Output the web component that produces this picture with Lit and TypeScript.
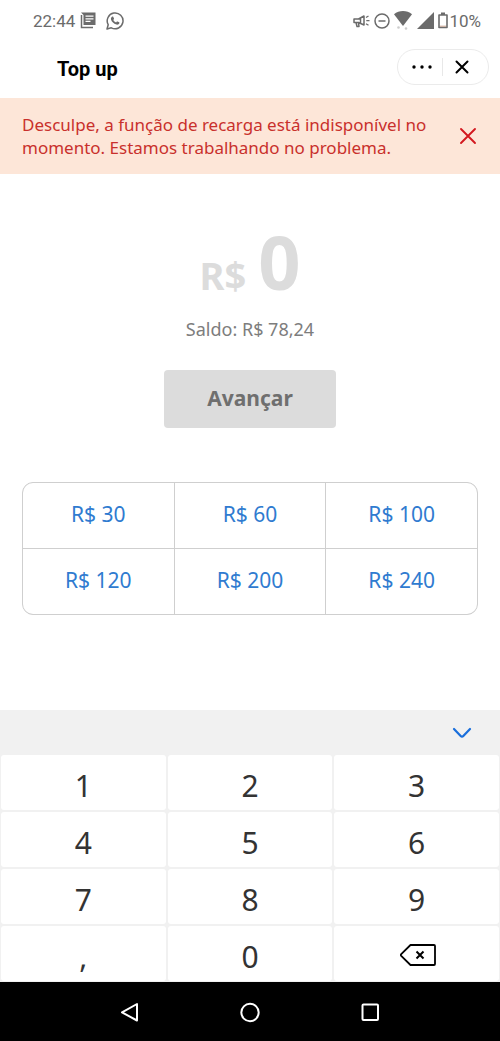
import { LitElement, html, css, svg } from "lit";
import { customElement } from "lit/decorators.js";

const AMOUNTS = ["30", "60", "100", "120", "200", "240"];
const KEYS = ["1", "2", "3", "4", "5", "6", "7", "8", "9", ",", "0"];

@customElement("status-bar")
export class StatusBar extends LitElement {
  static styles = css`
    :host {
      display: flex;
      align-items: center;
      justify-content: space-between;
      height: 40px;
      padding: 1px 19px 0 33px;
      box-sizing: border-box;
      font-family: Roboto, "Liberation Sans", sans-serif;
      font-size: 17px;
      line-height: 20px;
      color: #6b6b6b;
    }
    .group {
      display: flex;
      align-items: center;
    }
    .left {
      gap: 5px;
    }
    .chat {
      margin-left: 4px;
    }
    .right {
      gap: 4px;
    }
    .battery {
      display: flex;
      align-items: center;
      gap: 1px;
    }
    svg {
      display: block;
    }
  `;

  render() {
    return html`
      <div class="group left">
        <span>22:44</span>
        <svg width="17" height="17" viewBox="0 0 17 17" aria-hidden="true">
          <path d="M1.500 3V15.500H13" fill="none" stroke="#6b6b6b" stroke-width="1.500" />
          <path d="M1 0.500H15.500V13H3.500V3Z" fill="#6b6b6b" />
          <path d="M5.500 4.200H13.500M5.500 6.800H13.500M5.500 9.400H10.500" stroke="#fff" stroke-width="1.200" />
        </svg>
        <svg class="chat" width="18" height="18" viewBox="0 0 18 18" aria-hidden="true">
          <path d="M1 17L2.200 12.700A7.900 7.900 0 1 1 5.300 15.800Z" fill="none" stroke="#6b6b6b" stroke-width="1.500" stroke-linejoin="round" />
          <path d="M6.400 4.600c.4-.1.700 0 .9.400l.7 1.600c.1.300 0 .5-.2.700l-.5.600c.6 1.200 1.500 2 2.800 2.600l.8-.9c.2-.2.400-.3.700-.1l1.500.8c.3.200.4.400.3.700-.3 1.400-1.700 2-3 1.600C7.700 11.800 5.700 9.800 5 7.500c-.3-1.200.3-2.500 1.400-2.900Z" fill="#6b6b6b" />
        </svg>
      </div>
      <div class="group right">
        <svg width="17" height="14" viewBox="0 0 17 14" aria-hidden="true">
          <path d="M1 5H5.500L11 2V11L5.500 8.500H1ZM3 8.500L4 12.500H6L5.500 8.800M7.500 4.500V9" fill="none" stroke="#6b6b6b" stroke-width="1.500" stroke-linejoin="round" />
          <path d="M13 3.500L15.500 2M13.300 6.600H16.500M13 9.700L15.500 11.200" stroke="#6b6b6b" stroke-width="1.300" />
        </svg>
        <svg width="16" height="16" viewBox="0 0 16 16" aria-hidden="true">
          <circle cx="8" cy="8" r="7" fill="none" stroke="#6b6b6b" stroke-width="1.500" />
          <path d="M4.500 8H11.500" stroke="#6b6b6b" stroke-width="1.500" />
        </svg>
        <svg width="18" height="20" viewBox="0 0 18 20" aria-hidden="true">
          <path d="M0 3.200C5-1 13-1 18 3.200L9 15Z" fill="#6b6b6b" />
          <circle cx="4.500" cy="16.500" r="1.300" fill="#ccc" />
          <circle cx="12" cy="17.500" r="1.300" fill="#ccc" />
        </svg>
        <svg width="18" height="18" viewBox="0 0 18 18" aria-hidden="true">
          <path d="M18 0V17H1Z" fill="#6b6b6b" />
        </svg>
        <div class="battery">
          <svg width="10" height="18" viewBox="0 0 10 18" aria-hidden="true">
            <path d="M1 3H9V15.500H1Z" fill="none" stroke="#6b6b6b" stroke-width="1.600" stroke-linejoin="round" />
            <path d="M3 .5H7V3H3Z" fill="#6b6b6b" />
            <path d="M2 14.200H8" stroke="#c9a08c" stroke-width="1" />
          </svg>
          <span>10%</span>
        </div>
      </div>
    `;
  }
}

@customElement("page-header")
export class PageHeader extends LitElement {
  static styles = css`
    :host {
      display: flex;
      align-items: center;
      justify-content: space-between;
      height: 58px;
      padding: 0 11px 4px 57px;
      box-sizing: border-box;
    }
    h1 {
      margin: 0;
      padding-top: 4px;
      font-family: Roboto, "Liberation Sans", sans-serif;
      font-size: 20px;
      line-height: 24px;
      font-weight: 700;
      color: #000;
    }
    .capsule {
      display: flex;
      align-items: center;
      box-sizing: border-box;
      width: 92px;
      height: 36px;
      border: 1px solid #ebebeb;
      border-radius: 18px;
    }
    button {
      display: flex;
      width: 45px;
      height: 34px;
      align-items: center;
      justify-content: center;
      padding: 0;
      border: 0;
      background: none;
    }
    .more {
      padding-left: 4px;
    }
    .close {
      padding-right: 8px;
    }
    .divider {
      width: 1px;
      height: 18px;
      background: #e8e8e8;
    }
  `;

  render() {
    return html`
      <h1>Top up</h1>
      <div class="capsule">
        <button class="more" aria-label="Mais opções">
          <svg width="20" height="4" viewBox="0 0 20 4">
            <circle cx="2" cy="2" r="1.700" />
            <circle cx="10" cy="2" r="1.700" />
            <circle cx="18" cy="2" r="1.700" />
          </svg>
        </button>
        <span class="divider"></span>
        <button class="close" aria-label="Fechar">
          <svg width="14" height="14" viewBox="0 0 14 14">
            <path d="M1.500 1.500L12.500 12.500M12.500 1.500L1.500 12.500" stroke="#000" stroke-width="2" stroke-linecap="round" />
          </svg>
        </button>
      </div>
    `;
  }
}

@customElement("num-pad")
export class NumPad extends LitElement {
  static styles = css`
    :host {
      display: block;
      background: #f1f1f1;
    }
    .bar {
      display: flex;
      justify-content: flex-end;
      align-items: center;
      height: 45px;
      padding-right: 28px;
    }
    button {
      display: flex;
      align-items: center;
      justify-content: center;
      padding: 0;
      border: 0;
      background: none;
      font: inherit;
      color: inherit;
    }
    .keys {
      display: grid;
      grid-template-columns: repeat(3, 1fr);
      gap: 2px;
      padding: 0 1px 1px;
      font-size: 30px;
      line-height: 44px;
      color: #333;
    }
    .key {
      height: 55px;
      padding-top: 6px;
      border-radius: 3px;
      background: #fff;
    }
    .erase {
      padding: 2px 0 0 2px;
    }
  `;

  render() {
    return html`
      <div class="bar">
        <button aria-label="Ocultar teclado">
          <svg width="20" height="12" viewBox="0 0 20 12">
            <path d="M2 2L8.700 9Q10 10.400 11.300 9L18 2" fill="none" stroke="#1a6fdc" stroke-width="2.200" stroke-linecap="round" />
          </svg>
        </button>
      </div>
      <div class="keys">
        ${KEYS.map((k) => html`<button class="key">${k}</button>`)}
        <button class="key erase" aria-label="Apagar">
          <svg width="36" height="22" viewBox="0 0 36 22">
            <path d="M10.500 1H34Q35 1 35 2V20Q35 21 34 21H10.500L1.200 11.800Q.5 11 1.200 10.200Z" fill="none" stroke="#000" stroke-width="1.800" stroke-linejoin="round" />
            <path d="M16.500 7.500L23.500 14.500M23.500 7.500L16.500 14.500" stroke="#000" stroke-width="2" />
          </svg>
        </button>
      </div>
    `;
  }
}

@customElement("nav-bar")
export class NavBar extends LitElement {
  static styles = css`
    :host {
      display: flex;
      justify-content: center;
      align-items: center;
      gap: 96px;
      height: 59px;
      background: #000;
    }
    button {
      display: flex;
      justify-content: center;
      width: 24px;
      padding: 0;
      border: 0;
      background: none;
    }
  `;

  render() {
    const shapes: [string, unknown][] = [
      ["Voltar", svg`<path d="M19 4V20.500L4 12.300Z" />`],
      ["Início", svg`<circle cx="12" cy="12.500" r="8.700" />`],
      ["Recentes", svg`<rect x="4.500" y="4.500" width="15.500" height="15.500" rx="1" />`],
    ];
    return shapes.map(
      ([label, shape]) => html`<button aria-label=${label}>
        <svg width="24" height="24" viewBox="0 0 24 24" fill="none" stroke="#fff" stroke-width="2" stroke-linejoin="round">${shape}</svg>
      </button>`
    );
  }
}

@customElement("app-root")
export class AppRoot extends LitElement {
  static styles = css`
    :host {
      display: flex;
      flex-direction: column;
      min-height: 100vh;
      background: #fff;
      font-family: "Noto Sans", "Open Sans", sans-serif;
    }
    button {
      padding: 0;
      border: 0;
      background: none;
      font: inherit;
    }
    .alert {
      display: flex;
      align-items: center;
      justify-content: space-between;
      padding: 15px 22px 15px;
      background: #fde6d8;
      color: #c9302c;
    }
    .alert p {
      margin: 0;
      font-size: 17px;
      line-height: 23px;
    }
    .dismiss {
      display: flex;
      flex: none;
      padding: 0 1px;
    }
    main {
      display: flex;
      flex: 1;
      flex-direction: column;
      align-items: center;
      padding: 40px 22px 0;
    }
    .amount {
      display: flex;
      align-items: baseline;
      gap: 12px;
      height: 100px;
      font-weight: 700;
      line-height: 96px;
      color: #dcdcdc;
    }
    .currency {
      font-size: 38px;
    }
    .value {
      font-size: 74px;
    }
    .balance {
      margin: 3px 0 0;
      font-size: 18px;
      line-height: 24px;
      color: #7d7d7d;
    }
    .next {
      width: 172px;
      height: 58px;
      margin-top: 29px;
      padding-bottom: 2px;
      border-radius: 4px;
      background: #dcdcdc;
      font-size: 21px;
      font-weight: 700;
      color: #6f6f6f;
    }
    .presets {
      display: grid;
      grid-template-columns: repeat(3, 1fr);
      gap: 1px;
      align-self: stretch;
      margin-top: 54px;
      border: 1px solid #cfcfcf;
      border-radius: 11px;
      background: #cfcfcf;
      overflow: hidden;
    }
    .preset {
      height: 65px;
      padding-bottom: 3px;
      background: #fff;
      font-size: 21px;
      color: #2f7bd0;
    }
  `;

  render() {
    return html`
      <status-bar></status-bar>
      <page-header></page-header>
      <div class="alert" role="alert">
        <p>Desculpe, a função de recarga está indisponível no momento. Estamos trabalhando no problema.</p>
        <button class="dismiss" aria-label="Dispensar aviso">
          <svg width="18" height="18" viewBox="0 0 18 18">
            <path d="M2 2L16 16M16 2L2 16" stroke="#d3181f" stroke-width="1.900" stroke-linecap="round" />
          </svg>
        </button>
      </div>
      <main>
        <div class="amount"><span class="currency">R$</span><span class="value">0</span></div>
        <p class="balance">Saldo: R$ 78,24</p>
        <button class="next">Avançar</button>
        <div class="presets">
          ${AMOUNTS.map((a) => html`<button class="preset">R$ ${a}</button>`)}
        </div>
      </main>
      <num-pad></num-pad>
      <nav-bar></nav-bar>
    `;
  }
}
